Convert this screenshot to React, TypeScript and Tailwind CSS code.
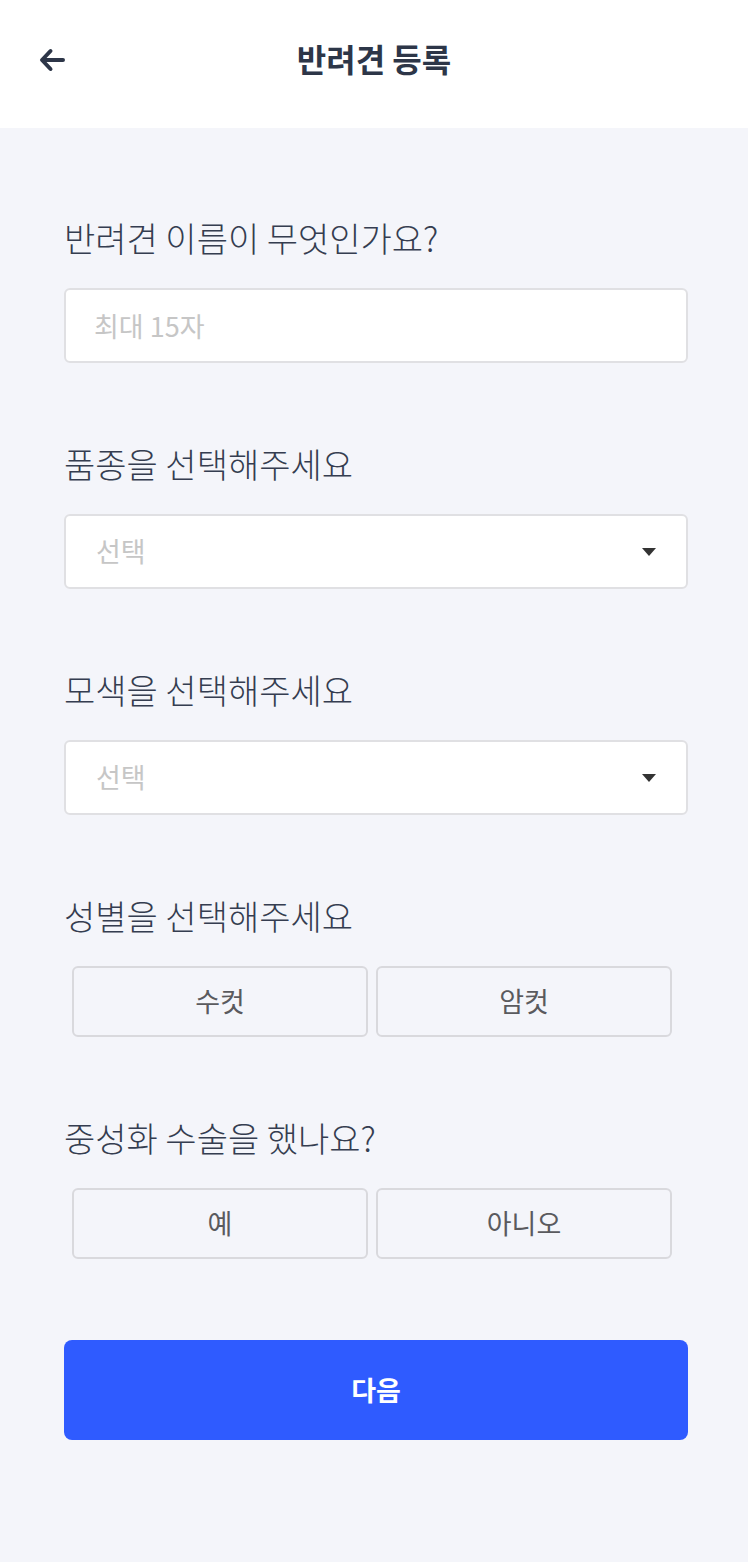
import { useState } from 'react';

const font = { fontFamily: '"Noto Sans CJK KR", "Noto Sans", sans-serif' };
const light = { fontFamily: '"Noto Sans CJK KR Light", "Noto Sans CJK KR DemiLight", "Noto Sans CJK KR", sans-serif' };

function Label({ children }: { children: React.ReactNode }) {
  return (
    <p className="mb-[30px] h-10 text-[34px] leading-10 font-light text-[#353d50]" style={light}>
      {children}
    </p>
  );
}

function SelectBox() {
  return (
    <div className="flex h-[75px] items-center justify-between rounded-md border-2 border-[#e0e0e3] bg-white pl-[30px] pr-[30px]">
      <span className="text-[27px] text-[#c6c6c6]">선택</span>
      <svg width="14" height="8" viewBox="0 0 14 8">
        <path d="M0 0h14L7 8z" fill="#333" />
      </svg>
    </div>
  );
}

function Choice({ options, value, onChange }: { options: string[]; value: string; onChange: (v: string) => void }) {
  return (
    <div className="ml-2 flex w-[600px] gap-2">
      {options.map((o) => (
        <button
          key={o}
          type="button"
          onClick={() => onChange(o)}
          className={`h-[71px] flex-1 rounded-md border-2 bg-transparent text-[27px] font-normal ${
            value === o ? 'border-[#2f5bff] text-[#2f5bff]' : 'border-[#d9d9dd] text-[#5a5a5e]'
          }`}
        >
          {o}
        </button>
      ))}
    </div>
  );
}

export default function App() {
  const [gender, setGender] = useState('');
  const [neutered, setNeutered] = useState('');

  return (
    <div className="min-h-[1562px] bg-[#f4f5fa]" style={font}>
      <header className="relative flex h-32 items-center justify-center bg-white pb-3">
        <button type="button" className="absolute left-[38px] top-[47px] p-0">
          <svg width="28" height="26" viewBox="0 0 28 26" fill="none" stroke="#2d3648" strokeWidth="4" strokeLinecap="round" strokeLinejoin="round">
            <path d="M25 13H5M12.5 4L4 13l8.5 9" />
          </svg>
        </button>
        <h1 className="text-[32px] font-bold text-[#2d3648]">반려견 등록</h1>
      </header>

      <main className="pl-16 pr-[60px] pt-[90px]">
        <section>
          <Label>반려견 이름이 무엇인가요?</Label>
          <input
            placeholder="최대 15자"
            maxLength={15}
            className="h-[75px] w-full rounded-md border-2 border-[#e0e0e3] bg-white px-[28px] text-[27px] text-[#333] outline-none placeholder:text-[#c6c6c6]"
          />
        </section>

        <section className="mt-[81px]">
          <Label>품종을 선택해주세요</Label>
          <SelectBox />
        </section>

        <section className="mt-[81px]">
          <Label>모색을 선택해주세요</Label>
          <SelectBox />
        </section>

        <section className="mt-[81px]">
          <Label>성별을 선택해주세요</Label>
          <Choice options={['수컷', '암컷']} value={gender} onChange={setGender} />
        </section>

        <section className="mt-[81px]">
          <Label>중성화 수술을 했나요?</Label>
          <Choice options={['예', '아니오']} value={neutered} onChange={setNeutered} />
        </section>

        <button
          type="button"
          className="mt-[81px] h-[100px] w-full rounded-lg bg-[#2f5bff] text-[27px] font-bold text-white"
        >
          다음
        </button>
      </main>
    </div>
  );
}
